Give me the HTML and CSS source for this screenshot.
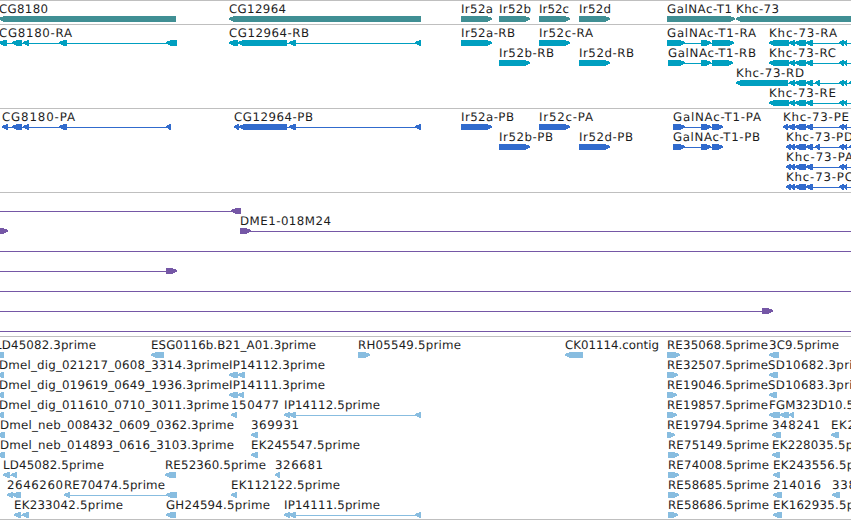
FILE: index.html
```html
<!DOCTYPE html>
<html lang="en">

<head>
    <meta charset="UTF-8">
    <title>Genome Browser</title>
    <link rel="stylesheet" href="styles.css">
</head>

<body>
    <div class="browser">
        <div class="track gene" id="gene"></div>
        <div class="track transcript" id="transcript"></div>
        <div class="track protein" id="protein"></div>
        <div class="track clone" id="clone"></div>
        <div class="track est" id="est"></div>
    </div>

    <script src="tracks.js"></script>
</body>

</html>
```

FILE: styles.css
```css
body {
    margin: 0;
    background-color: white;
    font-family: "DejaVu Sans", sans-serif;
}

.browser {
    width: 851px;
    overflow: hidden;
    border-bottom: 1px solid #bfbfbf;
}

.track {
    border-top: 1px solid #bfbfbf;
    padding: 2px 0 1px;
}

.track:last-child {
    padding-bottom: 0;
}

.row {
    display: block;
    width: 851px;
    height: 20px;
}

.label {
    font-size: 11.8px;
    fill: #1c1c1c;
    text-rendering: geometricPrecision;
}

.gene {
    color: #408f94;
}

.transcript {
    color: #009fc0;
}

.protein {
    color: #316bcd;
}

.clone {
    color: #7557a6;
}

.est {
    color: #88bde0;
}

.bar,
.intron {
    fill: currentColor;
    shape-rendering: crispEdges;
}
```

FILE: tracks.js
```javascript
// feature: [label, x, label width, direction, blocks, line]
// line is only given when it runs past the blocks
const tracks = {
    gene: [
        [
            ["CG8180", -1, 49, "<", [[-1, 176]]],
            ["CG12964", 229, 57, "<", [[229, 421]]],
            ["Ir52a", 461, 32, ">", [[461, 492]]],
            ["Ir52b", 499, 32, ">", [[499, 530]]],
            ["Ir52c", 539, 30, ">", [[539, 570]]],
            ["Ir52d", 579, 32, ">", [[579, 610]]],
            ["GalNAc-T1", 667, 65, ">", [[667, 735]]],
            ["Khc-73", 736, 43, "<", [[736, 870]]]
        ]
    ],
    transcript: [
        [
            ["CG8180-RA", -1, 73, "<", [[-1, 7], [12, 22], [23, 29], [59, 67], [166, 177]]],
            ["CG12964-RB", 229, 80, "<", [[229, 238], [238, 287], [289, 296], [415, 421]]],
            ["Ir52a-RB", 461, 54, ">", [[461, 492]]],
            ["Ir52c-RA", 539, 54, ">", [[539, 570]]],
            ["GalNAc-T1-RA", 667, 89, ">", [[667, 685], [701, 711], [712, 734]]],
            ["Khc-73-RA", 769, 68, "<", [[769, 789], [789, 795], [795, 806], [806, 813], [839, 844], [843, 847]], [769, 860]]
        ],
        [
            ["Ir52b-RB", 499, 55, ">", [[499, 530]]],
            ["Ir52d-RB", 579, 55, ">", [[579, 610]]],
            ["GalNAc-T1-RB", 668, 88, ">", [[668, 685], [701, 711], [712, 733]]],
            ["Khc-73-RC", 769, 67, "<", [[769, 789], [789, 795], [795, 806], [806, 813], [839, 844], [843, 847]], [769, 860]]
        ],
        [
            ["Khc-73-RD", 736, 68, "<", [[736, 788], [789, 795], [795, 806], [806, 813], [815, 820], [839, 844], [843, 847], [849, 857]]]
        ],
        [
            ["Khc-73-RE", 769, 67, "<", [[769, 789], [789, 795], [795, 806], [806, 813], [839, 844], [843, 847]], [769, 860]]
        ]
    ],
    protein: [
        [
            ["CG8180-PA", 2, 73, "<", [[2, 8], [12, 22], [23, 29], [59, 67], [166, 171]]],
            ["CG12964-PB", 234, 79, "<", [[234, 239], [239, 287], [289, 296], [415, 421]]],
            ["Ir52a-PB", 461, 53, ">", [[461, 492]]],
            ["Ir52c-PA", 539, 54, ">", [[539, 570]]],
            ["GalNAc-T1-PA", 673, 88, ">", [[673, 685], [701, 711], [712, 723]]],
            ["Khc-73-PE", 783, 66, "<", [[783, 788], [788, 795], [795, 806], [806, 813], [839, 844], [843, 847]], [783, 860]]
        ],
        [
            ["Ir52b-PB", 499, 54, ">", [[499, 530]]],
            ["Ir52d-PB", 579, 54, ">", [[579, 610]]],
            ["GalNAc-T1-PB", 673, 87, ">", [[673, 685], [701, 711], [712, 723]]],
            ["Khc-73-PD", 786, 67, "<", [[786, 791], [790, 795], [795, 806], [806, 813], [815, 820], [839, 844], [843, 847], [849, 857]]]
        ],
        [
            ["Khc-73-PA", 786, 67, "<", [[786, 791], [790, 795], [795, 806], [806, 813], [839, 844], [843, 847]], [786, 860]]
        ],
        [
            ["Khc-73-PC", 786, 67, "<", [[786, 791], [790, 795], [795, 806], [806, 813], [839, 844], [843, 847]], [786, 860]]
        ]
    ],
    clone: [
        [["", 0, 0, "<", [[231, 241]], [0, 241]]],
        [
            ["", 0, 0, ">", [[-4, 8]]],
            ["DME1-018M24", 240, 91, ">", [[240, 251]], [240, 860]]
        ],
        [["", 0, 0, "<", [], [0, 860]]],
        [["", 0, 0, ">", [[166, 177]], [0, 170]]],
        [["", 0, 0, "<", [], [0, 860]]],
        [["", 0, 0, ">", [[762, 773]], [0, 766]]],
        [["", 0, 0, "<", [], [0, 860]]]
    ],
    est: [
        [
            ["LD45082.3prime", -5, 101, "<", [[-8, 4]]],
            ["ESG0116b.B21_A01.3prime", 151, 165, "<", [[151, 164]]],
            ["RH05549.5prime", 358, 103, ">", [[358, 370]]],
            ["CK01114.contig", 565, 94, "<", [[565, 583]]],
            ["RE35068.5prime", 667, 101, ">", [[667, 680]]],
            ["3C9.5prime", 769, 70, "<", [[769, 779]]]
        ],
        [
            ["Dmel_dig_021217_0608_3314.3prime", -1, 230, "<", [[-3, 4]]],
            ["IP14112.3prime", 229, 96, "<", [[229, 238], [238, 245]]],
            ["RE32507.5prime", 667, 101, ">", [[667, 678]]],
            ["SD10682.3prime", 768, 104, "<", [[769, 778]]]
        ],
        [
            ["Dmel_dig_019619_0649_1936.3prime", -1, 230, "<", [[-3, 4]]],
            ["IP14111.3prime", 229, 96, "<", [[229, 238], [238, 244]]],
            ["RE19046.5prime", 667, 101, ">", [[667, 677]]],
            ["SD10683.3prime", 768, 104, "<", [[769, 777]]]
        ],
        [
            ["Dmel_dig_011610_0710_3011.3prime", -1, 230, "<", [[-3, 4]]],
            ["150477", 231, 48, "<", [[231, 237]]],
            ["IP14112.5prime", 284, 96, "<", [[284, 290], [289, 296], [415, 421]]],
            ["RE19857.5prime", 667, 101, ">", [[667, 677]]],
            ["FGM323D10.5prime", 769, 120, "<", [[769, 780], [780, 789], [789, 794]]]
        ],
        [
            ["Dmel_neb_008432_0609_0362.3prime", 0, 234, "<", [[-3, 5]]],
            ["369931", 251, 48, "<", [[251, 258]]],
            ["RE19794.5prime", 667, 101, ">", [[667, 675]]],
            ["348241", 772, 48, "<", [[772, 781]]],
            ["EK2", 831, 24, "<", [[831, 839]]]
        ],
        [
            ["Dmel_neb_014893_0616_3103.3prime", 0, 234, "<", [[-3, 5]]],
            ["EK245547.5prime", 251, 109, "<", [[251, 258]]],
            ["RE75149.5prime", 668, 101, ">", [[668, 679]]],
            ["EK228035.5prime", 772, 109, "<", [[772, 780]]]
        ],
        [
            ["LD45082.5prime", 3, 101, "<", [[3, 10], [11, 17]]],
            ["RE52360.5prime", 165, 101, "<", [[165, 176]]],
            ["326681", 275, 48, "<", [[275, 280]]],
            ["RE74008.5prime", 668, 101, ">", [[668, 679]]],
            ["EK243556.5prime", 773, 109, "<", [[773, 780]]]
        ],
        [
            ["2646260", 7, 56, "<", [[7, 13], [12, 21]]],
            ["RE70474.5prime", 64, 101, "<", [[64, 70], [166, 177]]],
            ["EK112122.5prime", 231, 109, "<", [[231, 237]]],
            ["RE58685.5prime", 668, 101, ">", [[668, 679]]],
            ["214016", 773, 48, "<", [[773, 782]]],
            ["338", 832, 24, "<", [[832, 840]]]
        ],
        [
            ["EK233042.5prime", 14, 109, "<", [[14, 21], [22, 29]]],
            ["GH24594.5prime", 166, 104, "<", [[166, 176]]],
            ["IP14111.5prime", 284, 96, "<", [[284, 290], [289, 296], [415, 421]]],
            ["RE58686.5prime", 668, 101, ">", [[668, 678]]],
            ["EK162935.5prime", 773, 109, "<", [[773, 782]]]
        ]
    ]
};

function add(parent, name, attrs) {
    const el = document.createElementNS("http://www.w3.org/2000/svg", name);
    for (const key in attrs) {
        el.setAttribute(key, attrs[key]);
    }
    parent.appendChild(el);
    return el;
}

// 6px high block with a pointed head
function drawBlock(svg, start, end, dir) {
    const head = Math.min(5, end - start - 1);
    const tip = dir === "<" ? start : end;
    const back = dir === "<" ? end : start;
    const step = dir === "<" ? 1 : -1;
    const neck = tip + step * head;
    const points = [
        [back, 13],
        [neck, 13],
        [tip + step * 2, 14.2],
        [tip, 15],
        [tip, 16.4],
        [tip + step * 2, 17.4],
        [neck, 19],
        [back, 19]
    ];
    add(svg, "polygon", { class: "bar", points: points.join(" ") });
}

function drawFeature(svg, [label, x, width, dir, blocks, line]) {
    if (!line && blocks.length > 1) {
        line = [blocks[0][0], blocks[blocks.length - 1][1]];
    }
    if (line) {
        add(svg, "rect", { class: "intron", x: line[0], y: 16, width: line[1] - line[0], height: 1 });
    }
    blocks.forEach(([start, end]) => drawBlock(svg, start, end, dir));
    if (label) {
        const text = add(svg, "text", { class: "label", x: x, y: 10, textLength: width });
        text.textContent = label;
    }
}

for (const id in tracks) {
    const track = document.getElementById(id);
    tracks[id].forEach(features => {
        const svg = add(track, "svg", { class: "row", viewBox: "0 0 851 20" });
        features.forEach(feature => drawFeature(svg, feature));
    });
}
```
